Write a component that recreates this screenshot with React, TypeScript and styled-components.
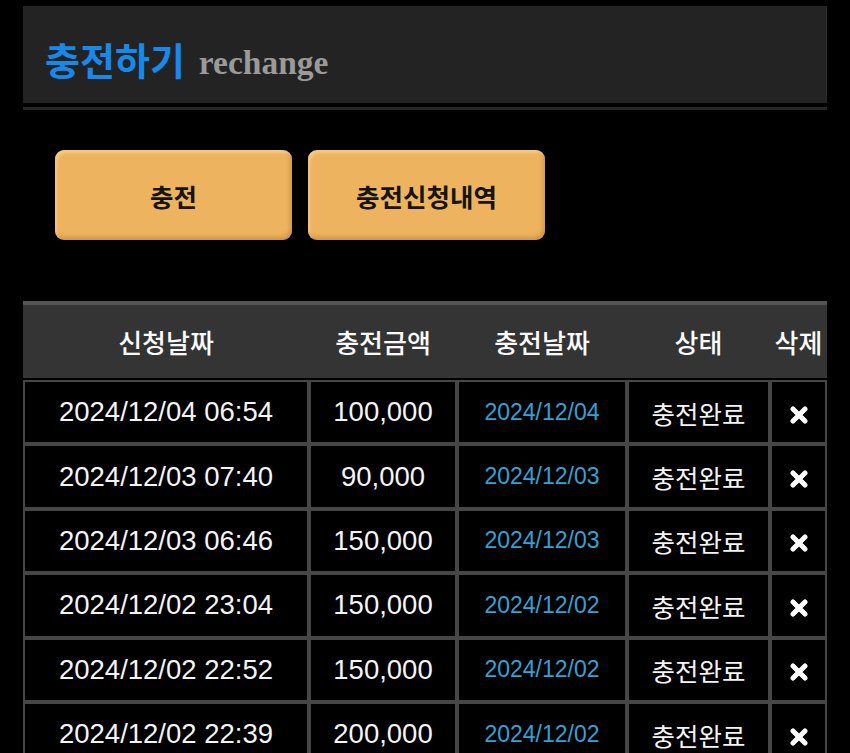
import { FC } from "react";
import styled, { createGlobalStyle } from "styled-components";

const GlobalStyle = createGlobalStyle`
    html, body {
        margin: 0;
        padding: 0;
        background: #000;
    }
    body {
        font-family: "Liberation Sans", "Noto Sans CJK KR", sans-serif;
        color: #fff;
    }
`

const Page = styled.div`
    padding: 6px 23px 0;
    display: flex;
    flex-direction: column;
`

const TitleBar = styled.div`
    height: 97px;
    background: #232323;
    border-right: 1px solid #2b2b2b;
    box-sizing: border-box;
    display: flex;
    align-items: center;
    gap: 14px;
    padding: 8px 0 0 22px;
`

const TitleKo = styled.h1`
    margin: 0;
    font-family: "Noto Sans CJK KR", sans-serif;
    font-size: 38px;
    font-weight: 700;
    color: #1689ea;
`

const TitleEn = styled.span`
    font-family: "Liberation Serif", serif;
    font-size: 33.5px;
    font-weight: 700;
    color: #9a9a9a;
    padding-top: 8px;
`

const Divider = styled.div`
    height: 3px;
    background: #262626;
    margin-top: 4px;
`

const ButtonRow = styled.div`
    display: flex;
    gap: 16px;
    padding: 40px 0 0 32px;
`

const Tab = styled.button`
    width: 237px;
    height: 90px;
    border: none;
    border-radius: 9px;
    background: #eeb35f;
    box-shadow: inset 2px 3px 3px rgba(255, 230, 180, 0.45),
        inset -2px -3px 4px rgba(150, 95, 30, 0.35);
    font-family: "Noto Sans CJK KR", sans-serif;
    font-size: 25.5px;
    font-weight: 700;
    color: #161310;
    cursor: pointer;
`

const Table = styled.table`
    margin-top: 61px;
    width: 804px;
    border-collapse: separate;
    border-spacing: 0;
    table-layout: fixed;
`

const HeadCell = styled.th`
    height: 73px;
    padding: 0;
    background: #343434;
    border-top: 4px solid #545454;
    border-bottom: 2px solid #000;
    font-family: "Noto Sans CJK KR", sans-serif;
    font-size: 26px;
    font-weight: 500;
    color: #fafafa;
`

const Row = styled.tr`
    height: 64.4px;
`

const Cell = styled.td<{ kind?: "date" | "text" }>`
    padding: 0;
    background: #000;
    border: 2px solid #464646;
    text-align: center;
    font-size: ${({ kind }) => (kind === "date" ? "23px" : kind === "text" ? "25.5px" : "27.5px")};
    color: ${({ kind }) => (kind === "date" ? "#31a3d6" : "#f4f4f4")};
    font-family: ${({ kind }) =>
        kind === "text" ? '"Noto Sans CJK KR", sans-serif' : '"Liberation Sans", sans-serif'};
`

const DeleteIcon: FC = () => (
    <svg width="20" height="18" viewBox="0 0 20 18" style={{ display: "block", margin: "5px auto 0" }}>
        <path d="M4 3 L16 15 M16 3 L4 15" stroke="#fff" strokeWidth="5" strokeLinecap="round" />
    </svg>
)

const rows = [
    { requested: "2024/12/04 06:54", amount: "100,000", charged: "2024/12/04" },
    { requested: "2024/12/03 07:40", amount: "90,000", charged: "2024/12/03" },
    { requested: "2024/12/03 06:46", amount: "150,000", charged: "2024/12/03" },
    { requested: "2024/12/02 23:04", amount: "150,000", charged: "2024/12/02" },
    { requested: "2024/12/02 22:52", amount: "150,000", charged: "2024/12/02" },
    { requested: "2024/12/02 22:39", amount: "200,000", charged: "2024/12/02" },
]

const App: FC = () => {
    return (
        <>
            <GlobalStyle />
            <Page>
                <TitleBar>
                    <TitleKo>충전하기</TitleKo>
                    <TitleEn>rechange</TitleEn>
                </TitleBar>
                <Divider />

                <ButtonRow>
                    <Tab>충전</Tab>
                    <Tab>충전신청내역</Tab>
                </ButtonRow>

                <Table>
                    <colgroup>
                        <col style={{ width: 286 }} />
                        <col style={{ width: 148 }} />
                        <col style={{ width: 170 }} />
                        <col style={{ width: 143 }} />
                        <col style={{ width: 57 }} />
                    </colgroup>
                    <thead>
                        <tr>
                            <HeadCell>신청날짜</HeadCell>
                            <HeadCell>충전금액</HeadCell>
                            <HeadCell>충전날짜</HeadCell>
                            <HeadCell>상태</HeadCell>
                            <HeadCell>삭제</HeadCell>
                        </tr>
                    </thead>
                    <tbody>
                        {rows.map((r, i) => (
                            <Row key={i}>
                                <Cell>{r.requested}</Cell>
                                <Cell>{r.amount}</Cell>
                                <Cell kind="date">{r.charged}</Cell>
                                <Cell kind="text">충전완료</Cell>
                                <Cell><DeleteIcon /></Cell>
                            </Row>
                        ))}
                    </tbody>
                </Table>
            </Page>
        </>
    )
}

export default App
